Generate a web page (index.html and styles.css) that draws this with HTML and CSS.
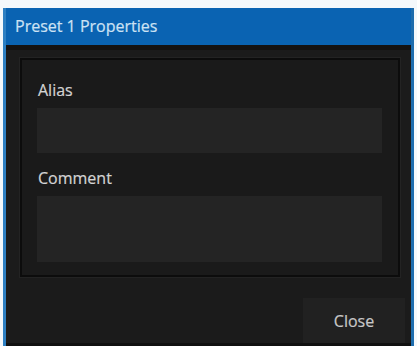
FILE: index.html
```html
<!DOCTYPE html>
<html>
<head>
<meta charset="utf-8">
<link rel="stylesheet" href="styles.css">
</head>
<body>
<div class="window">
  <div class="titlebar">Preset 1 Properties</div>
  <div class="content">
    <div class="panel">
      <div class="label">Alias</div>
      <div class="input alias"></div>
      <div class="label comment-label">Comment</div>
      <div class="input comment"></div>
    </div>
    <div class="footer">
      <div class="close-btn">Close</div>
    </div>
  </div>
</div>
</body>
</html>
```

FILE: styles.css
```css
html, body {
  margin: 0;
  padding: 0;
  background: #f4f8fb;
  width: 417px;
  height: 346px;
  overflow: hidden;
}
.window {
  margin: 8px 0 0 3px;
  width: 411px;
  height: 338px;
  box-sizing: border-box;
  border-left: 3px solid #2d7fc2;
  border-right: 3px solid #1d6cad;
  background: #1c1c1c;
  display: flex;
  flex-direction: column;
  font-family: "Open Sans", "Noto Sans", "Liberation Sans", sans-serif;
}
.titlebar {
  height: 37px;
  background: #0a63b2;
  color: #cde2f4;
  font-size: 16px;
  line-height: 37px;
  padding-left: 9px;
  flex: none;
  -webkit-text-stroke: 0.2px #cde2f4;
}
.content {
  flex: 1;
  display: flex;
  flex-direction: column;
  background: #1b1b1b;
  border-top: 5px solid #141212;
  border-bottom: 3px solid #101010;
}
.panel {
  margin: 8px 11px 0 14px;
  background: #1a1a1a;
  border: 2px solid #0c0c0c;
  box-shadow: 0 0 0 1px #232323;
  padding: 19px 16px 13px 15px;
  display: flex;
  flex-direction: column;
}
.label {
  color: #d4d4d4;
  font-size: 16px;
  line-height: 22px;
  height: 22px;
  padding-left: 1px;
  -webkit-text-stroke: 0.2px #d4d4d4;
}
.input {
  background: #242424;
  margin-top: 7px;
}
.alias {
  height: 45px;
}
.comment-label {
  margin-top: 14px;
}
.comment {
  height: 66px;
}
.footer {
  flex: 1;
  display: flex;
  justify-content: flex-end;
  align-items: flex-end;
  padding-right: 6px;
}
.close-btn {
  width: 102px;
  height: 45px;
  background: #212121;
  color: #c8c8c8;
  font-size: 16px;
  display: flex;
  align-items: center;
  justify-content: center;
  -webkit-text-stroke: 0.2px #c8c8c8;
}
```
